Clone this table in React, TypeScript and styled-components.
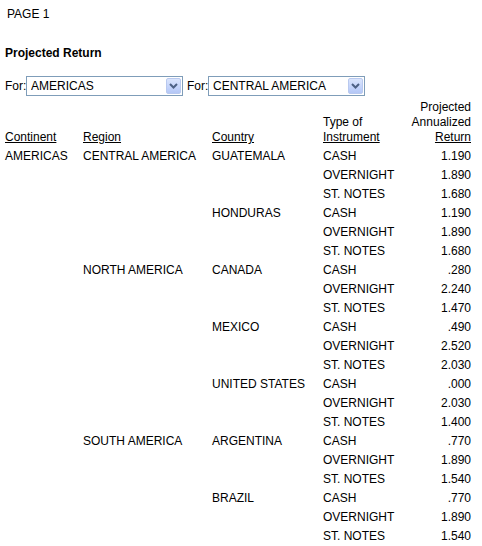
import React from "react";
import styled, { createGlobalStyle } from "styled-components";

const GlobalStyle = createGlobalStyle`
  html, body { margin: 0; padding: 0; background: #ffffff; }
  body { font-family: "Liberation Sans", Arial, sans-serif; font-size: 12px; color: #000000; }
`;

const Page = styled.div`
  padding: 0 5px;
  width: 472px;
`;

const PageLabel = styled.div`
  margin-top: 7px;
  padding-left: 2px;
  line-height: 14px;
`;

const Title = styled.div`
  margin-top: 25px;
  font-weight: bold;
  line-height: 14px;
`;

const FilterRow = styled.div`
  margin-top: 16px;
  display: flex;
  align-items: center;
  height: 20px;
`;

const ForLabel = styled.span`
  line-height: 20px;
  width: 21px;
  white-space: nowrap;
`;

const SelectBox = styled.div`
  box-sizing: border-box;
  width: 157px;
  height: 20px;
  border: 1px solid #7f9db9;
  display: flex;
  align-items: center;
  padding: 1px 1px 1px 4px;
  margin-right: 4px;
  background: #fff;
`;

const SelectText = styled.span`
  flex: 1;
  line-height: 16px;
  white-space: nowrap;
  overflow: hidden;
`;

const DropButton = styled.div`
  width: 15px;
  height: 16px;
  box-sizing: border-box;
  border: 1px solid #b9c9ef;
  border-radius: 2px;
  background: linear-gradient(180deg, #dbe5fc 0%, #c3d3fb 60%, #b4c7f6 100%);
  display: flex;
  align-items: center;
  justify-content: center;
`;

const Grid = styled.div`
  margin-top: 4px;
  display: grid;
  grid-template-columns: 78px 129px 111px 88px 60px;
`;

const HeadCell = styled.div<{ $right?: boolean }>`
  align-self: end;
  line-height: 15px;
  white-space: nowrap;
  text-align: ${(p) => (p.$right ? "right" : "left")};
  padding-bottom: 2px;
`;

const HeadText = styled.span`
  text-decoration: underline;
`;

const Cell = styled.div<{ $right?: boolean }>`
  line-height: 19px;
  height: 19px;
  white-space: nowrap;
  text-align: ${(p) => (p.$right ? "right" : "left")};
`;

type Row = [string, string, string, string, string];

const rows: Row[] = [
  ["AMERICAS", "CENTRAL AMERICA", "GUATEMALA", "CASH", "1.190"],
  ["", "", "", "OVERNIGHT", "1.890"],
  ["", "", "", "ST. NOTES", "1.680"],
  ["", "", "HONDURAS", "CASH", "1.190"],
  ["", "", "", "OVERNIGHT", "1.890"],
  ["", "", "", "ST. NOTES", "1.680"],
  ["", "NORTH AMERICA", "CANADA", "CASH", ".280"],
  ["", "", "", "OVERNIGHT", "2.240"],
  ["", "", "", "ST. NOTES", "1.470"],
  ["", "", "MEXICO", "CASH", ".490"],
  ["", "", "", "OVERNIGHT", "2.520"],
  ["", "", "", "ST. NOTES", "2.030"],
  ["", "", "UNITED STATES", "CASH", ".000"],
  ["", "", "", "OVERNIGHT", "2.030"],
  ["", "", "", "ST. NOTES", "1.400"],
  ["", "SOUTH AMERICA", "ARGENTINA", "CASH", ".770"],
  ["", "", "", "OVERNIGHT", "1.890"],
  ["", "", "", "ST. NOTES", "1.540"],
  ["", "", "BRAZIL", "CASH", ".770"],
  ["", "", "", "OVERNIGHT", "1.890"],
  ["", "", "", "ST. NOTES", "1.540"],
];

const Chevron = () => (
  <svg width="9" height="6" viewBox="0 0 9 6">
    <path d="M1 1 L4.5 4.5 L8 1" fill="none" stroke="#4d6185" strokeWidth="2" />
  </svg>
);

const Select = ({ value }: { value: string }) => (
  <SelectBox>
    <SelectText>{value}</SelectText>
    <DropButton>
      <Chevron />
    </DropButton>
  </SelectBox>
);

export default function App() {
  return (
    <Page>
      <GlobalStyle />
      <PageLabel>PAGE 1</PageLabel>
      <Title>Projected Return</Title>
      <FilterRow>
        <ForLabel>For:</ForLabel>
        <Select value="AMERICAS" />
        <ForLabel>For:</ForLabel>
        <Select value="CENTRAL AMERICA" />
      </FilterRow>
      <Grid>
        <HeadCell><HeadText>Continent</HeadText></HeadCell>
        <HeadCell><HeadText>Region</HeadText></HeadCell>
        <HeadCell><HeadText>Country</HeadText></HeadCell>
        <HeadCell>
          Type of
          <br />
          <HeadText>Instrument</HeadText>
        </HeadCell>
        <HeadCell $right>
          Projected
          <br />
          Annualized
          <br />
          <HeadText>Return</HeadText>
        </HeadCell>
        {rows.map((r, i) => (
          <React.Fragment key={i}>
            <Cell>{r[0]}</Cell>
            <Cell>{r[1]}</Cell>
            <Cell>{r[2]}</Cell>
            <Cell>{r[3]}</Cell>
            <Cell $right>{r[4]}</Cell>
          </React.Fragment>
        ))}
      </Grid>
    </Page>
  );
}
